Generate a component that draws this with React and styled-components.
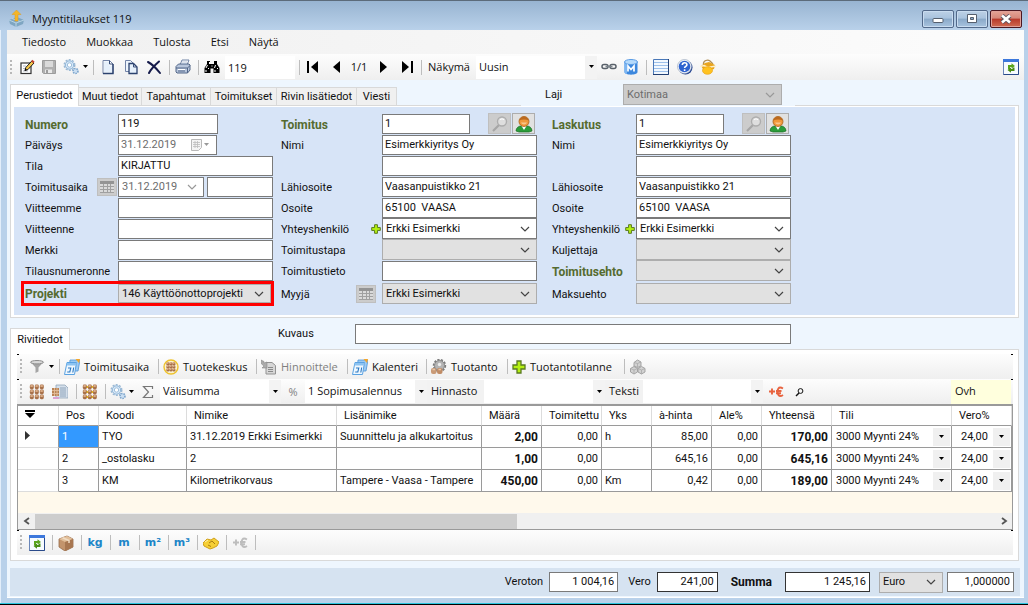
import React from "react";
import styled, { createGlobalStyle, css } from "styled-components";

const uiFont = `"Open Sans", "Noto Sans", sans-serif`;
const formFont = `Roboto, "Liberation Sans", sans-serif`;

const GlobalStyle = createGlobalStyle`
  *, *::before, *::after {
    box-sizing: border-box;
  }

  body {
    margin: 0;
    font: 11px/16px ${formFont};
    color: #111;
  }

  button, input, select {
    font: inherit;
    color: inherit;
    margin: 0;
    padding: 0;
    border: 0;
    border-radius: 0;
    outline: 0;
  }
`;

const Window = styled.div`
  min-height: 100vh;
  display: flex;
  flex-direction: column;
  padding: 0 4px 6px 7px;
  background: #b9d1ea;
  border-top: 1px solid #5c6b7a;
  border-bottom: 1px solid #000;
  box-shadow: inset 0 -1px #2cc5de, inset 1px 0 #e3eefa;
`;

const TitleBar = styled.header`
  height: 29px;
  display: flex;
  align-items: center;
  gap: 7px;
  margin: 0 -4px 0 -7px;
  padding: 6px 6px 0 8px;
  background: linear-gradient(#98b4d1, #b9d1ea);
  font: 11px/16px ${uiFont};
`;

const Title = styled.h1`
  margin: 0;
  flex: 1;
  font: inherit;
`;

const Caption = styled.button`
  width: 32px;
  height: 18px;
  margin-left: -5px;
  display: grid;
  place-items: center;
  border: 1px solid ${p => (p.$close ? "#4b1720" : "#52698a")};
  border-radius: 2px;
  box-shadow: inset 0 0 0 1px ${p => (p.$close ? "#e0a199" : "#c9dcf0")};
  background: ${p =>
    p.$close
      ? "linear-gradient(#e5a496 0, #d6887a 45%, #b8392a 50%, #cf6b52)"
      : "linear-gradient(#bdd1e6 0, #a9c3de 45%, #8aa9c9 50%, #a8c3de)"};
`;

const Client = styled.div`
  flex: 1;
  display: flex;
  flex-direction: column;
  background: #eef6fe;
  border-bottom: 1px solid #fff;
`;

const MenuBar = styled.nav`
  height: 24px;
  display: flex;
  align-items: center;
  gap: 20px;
  padding-left: 15px;
  background: linear-gradient(90deg, #f0f0f0, #fcfcfc);
  font: 11px/16px ${uiFont};
`;

const MenuItem = styled.button`
  background: none;
`;

const Toolbar = styled.div`
  height: ${p => p.$height || 25}px;
  display: flex;
  align-items: center;
  padding-left: 3px;
  background: linear-gradient(#fdfdfd, #efefef);
  font: 11px/16px ${uiFont};

  ${p =>
    p.$docked &&
    css`
      background:
        linear-gradient(#000, #000) 0 0 / 2px 1px no-repeat,
        linear-gradient(#000, #000) 100% 0 / 2px 1px no-repeat,
        linear-gradient(#fdfdfd, #efefef);
    `}
`;

const Grip = styled.span`
  width: 2px;
  height: 15px;
  margin-right: 4px;
  background: repeating-linear-gradient(#b8b8b8 0 2px, transparent 2px 4px);
`;

const Sep = styled.span`
  width: 1px;
  height: 15px;
  margin: 0 2px 0 4px;
  background: #bdbdbd;
`;

const ToolButton = styled.button`
  width: ${p => p.$w || 22}px;
  height: 22px;
  flex: none;
  display: flex;
  align-items: center;
  justify-content: ${p => (p.$text ? "flex-start" : "center")};
  gap: 4px;
  padding-left: ${p => (p.$text ? 2 : 0)}px;
  background: none;
  white-space: nowrap;
  color: ${p => (p.disabled ? "#808080" : "inherit")};
`;

const ToolLabel = styled.label`
  width: ${p => p.$w}px;
  height: 23px;
  line-height: 22px;
  padding-left: 4px;
  background: ${p => (p.$plain ? "none" : "#f2f2f2")};
`;

const ToolOutput = styled.output`
  width: 20px;
  text-align: center;
`;

const ToolInput = styled.input`
  width: 70px;
  height: 23px;
  margin-left: 2px;
  padding-left: 3px;
  background: #fff;
`;

const Push = styled.span`
  flex: 1;
`;

const Price = styled.span`
  width: 60px;
  height: 24px;
  margin-right: 2px;
  padding: 3px 4px;
  background: #ffffdd;
`;

const UnitText = styled.span`
  font: 700 11px/16px "DejaVu Sans", sans-serif;
  color: #1d86c8;
`;

// tabs ------------------------------------------------------------

const TabRow = styled.div`
  display: flex;
  align-items: flex-end;
  height: ${p => p.$height}px;
  margin: ${p => p.$top}px 5px 0 3px;
`;

const Tabs = styled.div`
  width: ${p => (p.$w ? `${p.$w}px` : "auto")};
  height: 22px;
  display: flex;
  align-items: flex-end;
  border-bottom: 1px solid #d9d9d9;
`;

const Tab = styled.button`
  flex: none;
  width: ${p => p.$w}px;
  height: 18px;
  border: solid #d9d9d9;
  border-width: 1px 1px 0 0;
  background: #f0f0f0;

  ${p =>
    p.$active &&
    css`
      height: 22px;
      margin-bottom: -1px;
      border-left-width: 1px;
      background: #fff;
    `}
`;

const TypeField = styled.div`
  width: 274px;
  display: flex;
  align-items: center;
  padding: 0 0 1px 24px;

  label {
    width: 78px;
  }
`;

const Line = styled.span`
  flex: 1;
  border-bottom: 1px solid #d9d9d9;
`;

const DescriptionField = styled.div`
  flex: 1;
  align-self: stretch;
  display: flex;
  align-items: flex-start;
  padding: 4px 0 0 208px;
  border-bottom: 1px solid #d9d9d9;

  label {
    width: 77px;
    line-height: 20px;
  }
`;

const Panel = styled.section`
  margin: 0 5px 0 3px;
  padding: 1px 3px 2px;
  background: #fff;
  border: solid #d9d9d9;
  border-width: 0 1px 1px;
`;

const FormArea = styled.form`
  display: flex;
  padding: 6px 0 9px 7px;
  background: #d7e4f7;
`;

const Column = styled.div`
  display: grid;
  grid-template-rows: repeat(8, 21px) 25px;
  margin-right: ${p => p.$gap}px;
`;

const Row = styled.div`
  display: grid;
  grid-template-columns: ${p => p.$label}px 155px;
  align-items: center;
`;

const HighlightedRow = styled(Row)`
  grid-template-columns: 94px 153px;
  border: 3px solid #ff0000;
  width: 253px;

  label {
    padding-left: 1px;
  }
`;

const LabelCell = styled.div`
  display: flex;
  align-items: center;
  justify-content: space-between;
  padding-left: ${p => p.$indent || 0}px;
  padding-right: ${p => p.$right || 0}px;

  label {
    padding-top: 2px;
  }
`;

const FieldLabel = styled.label`
  ${p =>
    p.$strong &&
    css`
      font-weight: 700;
      font-size: 12px;
      color: #556b2f;
    `}
`;

const Controls = styled.div`
  display: flex;
  align-items: center;
`;

const TextInput = styled.input`
  width: ${p => p.$w || 155}px;
  height: 20px;
  padding: 0 ${p => (p.$number ? 3 : 2)}px 1px;
  border: 1px solid ${p => (p.$dark ? "#333" : "#7a7a7a")};
  background: #fff;
  text-align: ${p => (p.$number ? "right" : "left")};
`;

const SelectBox = styled.span`
  display: inline-grid;
  grid-template-columns: 1fr 17px;
  align-items: center;
  width: ${p => p.$w || 155}px;
  height: ${p => p.$h || 21}px;

  select {
    grid-area: 1 / 1 / 2 / 3;
    width: 100%;
    height: 100%;
    padding: 0 3px;
    appearance: none;
    opacity: 1;
    border: 1px solid ${p => (p.$white ? "#7a7a7a" : "#adadad")};
    background: ${p => (p.$white ? "#fff" : p.$off ? "#cccccc" : "#e1e1e1")};
    color: ${p => (p.$off ? "#6d6d6d" : "inherit")};
  }

  svg {
    grid-area: 1 / 2;
    pointer-events: none;
  }
`;

const FlatSelectBox = styled.span`
  display: inline-grid;
  grid-template-columns: 1fr 12px;
  align-items: center;
  width: ${p => p.$w}px;
  height: 23px;

  select {
    grid-area: 1 / 1 / 2 / 3;
    width: 100%;
    height: 100%;
    padding: 0 0 1px 3px;
    appearance: none;
    background: #fff;
  }

  span {
    grid-area: 1 / 2;
    height: 100%;
    display: grid;
    place-items: center;
    background: #f3f3f3;
    pointer-events: none;
  }
`;

const DateBox = styled.div`
  width: 99px;
  height: 20px;
  display: flex;
  align-items: center;
  border: 1px solid #7a7a7a;
  background: #fff;

  input {
    width: 72px;
    padding-left: 2px;
    background: none;
    color: #6d6d6d;
  }
`;

const SquareButton = styled.button`
  width: ${p => p.$w || 20}px;
  height: ${p => p.$h || 18}px;
  display: grid;
  place-items: center;
  margin-left: ${p => p.$left || 0}px;
  border: 1px solid ${p => (p.disabled ? "#bfbfbf" : "#adadad")};
  background: ${p => (p.disabled ? "#cccccc" : "#e1e1e1")};
`;

const PlusButton = styled.button`
  width: 10px;
  height: 10px;
  display: grid;
  background: none;
`;

// rows ------------------------------------------------------------

const RowsPanel = styled(Panel)`
  flex: 1;
  display: flex;
  flex-direction: column;
  padding: 4px 5px 5px 6px;
`;

const GridBox = styled.div`
  flex: 1;
  display: flex;
  flex-direction: column;
  border: 1px solid #9a9a9a;
  border-top-width: 2px;
  background: #fff9ec;
  overflow: hidden;
`;

const Table = styled.table`
  width: 994px;
  table-layout: fixed;
  border-collapse: separate;
  border-spacing: 0;
  background: #fff;
  white-space: nowrap;

  th,
  td {
    padding: 0 3px;
    border-bottom: 1px solid #9a9a9a;
    overflow: hidden;
  }

  th {
    height: 20px;
    padding-left: 7px;
    font-weight: 400;
    text-align: left;
    border-right: 1px solid #dcdcdc;
  }

  td {
    height: 22px;
    border-right: 1px solid #9a9a9a;
  }

  td:first-child {
    border-bottom-color: #dcdcdc;
  }
`;

const Cell = styled.td`
  text-align: ${p => (p.$num ? "right" : "left")};
  font-weight: ${p => (p.$bold ? 700 : 400)};
  font-size: ${p => (p.$bold ? 12 : 11)}px;
  background: ${p => (p.$selected ? "#3399ff" : "transparent")};
  color: ${p => (p.$selected ? "#fff" : "inherit")};
`;

const DropCell = styled.div`
  display: flex;
  align-items: center;
  justify-content: space-between;
  padding-left: ${p => p.$left || 1}px;
  margin-right: -2px;

  button {
    width: 17px;
    height: 18px;
    display: grid;
    place-items: center;
    background: #f0f0f0;
  }
`;

const ScrollBar = styled.div`
  height: 16px;
  display: flex;
  align-items: center;
  margin-top: auto;
  background: #f0f0f0;

  button {
    width: 17px;
    height: 16px;
    display: grid;
    place-items: center;
    background: none;
  }
`;

const Thumb = styled.span`
  width: 482px;
  height: 15px;
  background: #cdcdcd;
`;

const StatusBar = styled.footer`
  height: 28px;
  display: flex;
  align-items: center;
  justify-content: flex-end;
  margin: 7px 4px 1px 3px;
  padding-right: 6px;
  background: #d6e3f1;

  label {
    padding: 0 6px 0 10px;
  }
`;

const SumLabel = styled.label`
  && {
    padding: 0 13px;
  }
  font-size: 12px;
  font-weight: 700;
`;

const CurrencyGap = styled.span`
  width: 9px;
`;

const RateInput = styled(TextInput)`
  margin-left: 4px;
`;

const TimeInput = styled(TextInput)`
  margin-left: 3px;
`;

// icons -----------------------------------------------------------

function Svg({ w = 16, h = 16, children }) {
  return (
    <svg width={w} height={h} viewBox={`0 0 ${w} ${h}`} fill="none" aria-hidden="true">
      {children}
    </svg>
  );
}

const Chevron = ({ color = "#555" }) => (
  <Svg w={10} h={6}>
    <path d="M1 1l4 4 4-4" stroke={color} strokeWidth="1.2" />
  </Svg>
);

const Caret = ({ color = "#000" }) => (
  <Svg w={7} h={4}>
    <path d="M1 0h5L3.500 3z" fill={color} />
  </Svg>
);

const AppIcon = () => (
  <Svg w={17} h={17}>
    <path d="M1 10l8-3 7 3-1 4-7 3-6-3z" fill="#7fa6c2" />
    <path d="M1 10l7 3 8-3M8 13v4M4 8.500l8 3" stroke="#b7d3e4" />
    <path d="M8.500 0L13 4.500h-3V11H7V4.500H4z" fill="#f5b529" stroke="#e09c17" strokeWidth=".5" />
  </Svg>
);

const EditIcon = () => (
  <Svg>
    <rect x="2" y="4" width="10" height="10.500" fill="#fff" stroke="#333" strokeWidth="1.200" />
    <path d="M4 7h3M4 9.500h2M4 12h5" stroke="#b4b9c4" />
    <path d="M6 11.500l.8-3 6-6.500L15 4 9 10.500z" fill="#f3c64a" stroke="#222" strokeWidth="1" />
    <path d="M12.800 1.500L15 3.500" stroke="#c4402c" strokeWidth="1.800" />
    <path d="M5.500 12l1-2.500L8 11z" fill="#000" />
  </Svg>
);

const SaveIcon = () => (
  <Svg>
    <path d="M1.500 1.500h13v13h-12l-1-1z" fill="#b0b0b0" stroke="#9c9c9c" />
    <path d="M4 2h8v6H4z" fill="#dadada" />
    <path d="M4 10.500h7V14H4z" fill="#e9e9e9" />
    <path d="M5 11h2v3H5z" fill="#9c9c9c" />
  </Svg>
);

const GearsIcon = () => (
  <Svg>
    <circle cx="6.500" cy="6" r="5.200" stroke="#9cb9d4" strokeWidth="1.600" strokeDasharray="2 1.300" />
    <circle cx="6.500" cy="6" r="4.200" fill="#d8e9f8" stroke="#8db4d8" />
    <circle cx="6.500" cy="6" r="2.200" fill="#fff" stroke="#9dbedb" />
    <circle cx="12.500" cy="12" r="2.500" fill="#cbdff2" stroke="#7aa3cb" strokeWidth="1.600" strokeDasharray="1.500 1" />
  </Svg>
);

const PageIcon = () => (
  <Svg>
    <path d="M3 1.500h6.500L13 5v9.500H3z" fill="#fff" stroke="#7485a8" />
    <path d="M4 2.500h5v4h3v7H4z" fill="#e6f0fb" />
    <path d="M9.500 1.500V5H13" stroke="#3a4e78" />
    <path d="M13 5v9.500H3" stroke="#2b416e" strokeWidth="1.400" />
  </Svg>
);

const CopyIcon = () => (
  <Svg>
    <path d="M2.500 1.500h5l3 3v8h-8z" fill="#eef5fd" stroke="#7485a8" />
    <path d="M6 4.500h4.500l3.500 3.500v6.500H6z" fill="#e6f0fb" stroke="#2b416e" strokeWidth="1.300" />
    <path d="M10.500 4.500V8H14" stroke="#3a4e78" />
  </Svg>
);

const DeleteIcon = () => (
  <Svg>
    <path d="M2 3c4 2 8 6 12 11M13 2.500C9 6 5 10 3 14" stroke="#151a4a" strokeWidth="2" strokeLinecap="round" />
  </Svg>
);

const PrintIcon = () => (
  <Svg>
    <path d="M5 6l2-5h7l-2 5z" fill="#fff" stroke="#7184a6" />
    <path d="M1 7.500L3.500 5H14l1 1v5l-2.500 3H2l-1-1z" fill="#b8c6dc" stroke="#526688" />
    <path d="M1 9h11.500L15 6.500M12.500 9v5M3 12h7" stroke="#526688" />
    <path d="M3 10.500h7" stroke="#fff" />
    <path d="M7 3h5M6.500 4.500h5" stroke="#9eb0cc" strokeWidth=".7" />
  </Svg>
);

const BinocularsIcon = () => (
  <Svg>
    <path d="M3 2h3v3h4V2h3v3l2.500 4v5H9.500V9.500h-3V14H.5V9L3 5z" fill="#000" />
    <path d="M3.500 6L2 9M11.500 6L10.500 9M5.500 3v2M7.500 7h1M2 11v2M11 11v2M4 9.500h1M13 9.500h1" stroke="#fff" />
  </Svg>
);

const ArrowIcon = ({ back, bar }) => (
  <Svg w={14} h={14}>
    <g transform={back ? "matrix(-1 0 0 1 14 0)" : undefined}>
      <path d={bar ? "M2 1l7 6-7 6z" : "M4 1l7 6-7 6z"} fill="#000" />
      {bar && <path d="M11 1h2v12h-2z" fill="#000" />}
    </g>
  </Svg>
);

const LinkIcon = () => (
  <Svg>
    <rect x="1" y="5.500" width="6" height="4" rx="2" stroke="#59616a" strokeWidth="1.500" />
    <rect x="9" y="5.500" width="6" height="4" rx="2" stroke="#59616a" strokeWidth="1.500" />
    <path d="M4.500 7.500h7" stroke="#7d868e" strokeWidth="1.600" />
  </Svg>
);

const DatabaseIcon = () => (
  <Svg>
    <path d="M1.500 3v10c0 3.500 13 3.500 13 0V3z" fill="#3c87dd" />
    <path d="M1.500 3v10c0 1 1 1.700 2.500 2V4z" fill="#7db6f2" />
    <ellipse cx="8" cy="3" rx="6.500" ry="2.500" fill="#b5dafb" stroke="#5b9ce5" />
    <path d="M5 12.500V7l3 3.500L11 7v5.500" stroke="#fff" strokeWidth="1.700" />
  </Svg>
);

const ListIcon = () => (
  <Svg>
    <path d="M.5.5h15v15H.5z" fill="#f2f8fe" stroke="#4a78b8" />
    <path d="M1 3.500h14M1 6.500h14M1 9.500h14M1 12.500h14" stroke="#9dc0ea" />
    <path d="M15.500 0v15.500H0" stroke="#213f73" />
  </Svg>
);

const HelpIcon = () => (
  <Svg>
    <circle cx="8.500" cy="8.500" r="7" fill="#1e3f8f" />
    <circle cx="7.500" cy="7.500" r="7" fill="#f5f8fc" stroke="#8f9db5" strokeWidth=".6" />
    <circle cx="7.500" cy="7.500" r="5.800" fill="#2f63cf" />
    <path d="M5.300 6c0-3 4.600-3 4.600-.3 0 1.700-2.300 1.600-2.300 3.300M7.600 10.300v1.600" stroke="#fff" strokeWidth="1.600" />
  </Svg>
);

const CoinIcon = () => (
  <Svg>
    <path d="M4 8L3.500 5.500C3 1 8 .500 10 2l3 3" stroke="#b08f55" strokeWidth="1.300" />
    <path d="M1 7l4-3 4-1 6 3-1 4-4 1-7-1z" fill="#e9a51e" />
    <path d="M0 7.500l4-1 4 2 8-1.500" stroke="#fdf1cc" strokeWidth="1.600" />
    <ellipse cx="7.500" cy="11.500" rx="5" ry="3.800" fill="#ffc21f" stroke="#eaa415" strokeWidth=".7" />
  </Svg>
);

const RefreshIcon = () => (
  <Svg>
    <path d="M.5.500h15v15H.5z" fill="#f7fbff" stroke="#6a86b8" />
    <path d="M0 0h16v3H0z" fill="#3d78dc" />
    <path d="M15.500 3v12.500H.5" stroke="#2a4a8a" />
    <path d="M5 10V6h3.500V4.200L12 7 8.500 9.500V8H7v2z" fill="#5aa51c" />
    <path d="M11.500 8.500V12H8v1.800L4.500 11 8 8.600V10h1.500V8.500z" fill="#4a8e14" />
  </Svg>
);

const FilterIcon = () => (
  <Svg>
    <path d="M1.500 3l5 5.500v5.500l3-1.500V8.500L14.500 3z" fill="#a5a5a5" />
    <ellipse cx="8" cy="3.200" rx="6.500" ry="1.700" fill="#d9d9d9" stroke="#8d8d8d" />
  </Svg>
);

const CalendarIcon = () => (
  <Svg>
    <path d="M6 1h10l-2 11H5z" fill="#9ccaf3" stroke="#4e94d6" strokeWidth=".8" />
    <path d="M11.500 0H16l-1 4z" fill="#f4a52a" />
    <path d="M3 3.500h9.500l-2 12H.5z" fill="#eef7fe" stroke="#5aa2e2" />
    <path d="M3 4h9.500l-.4 2.500H2.500z" fill="#8cc3f1" />
    <path d="M4 9h2.800l-1 4H3.200M9.700 8.500l-.9 5" stroke="#2b78c2" strokeWidth="1.100" />
  </Svg>
);

function Barrels({ yellow, ring }) {
  const spots = ring ? [5, 8, 11] : [3, 8, 13];
  return (
    <Svg>
      {ring && <circle cx="8" cy="8" r="7" fill="#fbf2cf" stroke="#eec22d" strokeWidth="1.400" />}
      {yellow && <path d="M3 3h10M3 8h10M3 13h10" stroke="#f2c718" strokeWidth="2" />}
      {spots.map(x =>
        spots.map(y => (
          <g key={`${x}-${y}`}>
            <rect
              x={x - (ring ? 1.6 : 2.2)}
              y={y - (ring ? 1.8 : 2.4)}
              width={ring ? 3 : 4}
              height={ring ? 3.4 : 4.6}
              rx="1.400"
              fill="#a8714a"
            />
            <ellipse cx={x - 0.4} cy={y - 1} rx={ring ? 1 : 1.500} ry="1" fill="#dcae88" />
          </g>
        ))
      )}
    </Svg>
  );
}

const PriceIcon = () => (
  <Svg>
    <path d="M5 3.500h6l3.500 3V15H5z" fill="#d7d7d7" stroke="#939393" />
    <path d="M7 8.500h5M7 10.500h5M7 12.500h5" stroke="#8a8a8a" />
    <path d="M0 1l3 1.500V4l3-1v6H1l2-2-2.500-2z" fill="#ababab" stroke="#8a8a8a" strokeWidth=".6" />
  </Svg>
);

const ProductionIcon = () => (
  <Svg>
    <circle cx="8.500" cy="6.500" r="5.800" stroke="#7c7c7c" strokeWidth="1.800" strokeDasharray="2.200 1.300" />
    <circle cx="8.500" cy="6.500" r="5" fill="#b4b4b4" stroke="#868686" />
    <circle cx="8.500" cy="5.500" r="1.700" fill="#ececec" />
    <rect x="0" y="9" width="5.500" height="6" rx="2" fill="#c99a76" />
    <rect x="6" y="9" width="5.500" height="6" rx="2" fill="#c08c66" />
    <path d="M1.500 10.500h2.500M7.500 10.500H10" stroke="#e6c5aa" strokeWidth="1.400" />
  </Svg>
);

const PlusIcon = ({ size = 14 }) => (
  <svg width={size} height={size} viewBox="0 0 14 14" aria-hidden="true">
    <path
      d="M5 1h4v4h4v4H9v4H5V9H1V5h4z"
      fill="#b4f012"
      stroke="#5a7a20"
      strokeWidth={size < 12 ? 1.4 : 1.300}
    />
  </svg>
);

const CubesIcon = () => (
  <Svg>
    <path
      d="M4 3.500L7.500 1l3.500 2v4L7.500 8.500 4 7zM0.500 9.500L4 7.500l3.500 2V13L4 15l-3.500-2zM8 9.500l3.500-2 3.500 2V13l-3.500 2L8 13z"
      fill="#d2d2d2"
      stroke="#a3a3a3"
    />
    <path d="M4 3.500l3.500 1L11 3M7.500 4.500v4M.5 9.500L4 11l3.500-1.500M4 11v4M8 9.500l3.500 1.500L15 9.500M11.500 11v4" stroke="#aaa" strokeWidth=".8" />
  </Svg>
);

const SheetIcon = () => (
  <Svg>
    <path d="M4 1h9l3 3v10H4z" fill="#d4dfeb" stroke="#92a5b8" strokeWidth=".8" />
    <path d="M8 4h6M8 6h6M8 8h6M8 10h6M8 12h6" stroke="#7f95ad" strokeWidth=".8" />
    <path d="M0 4h7v8H0z" fill="#b98355" />
    <path d="M0 6.500h7M0 9.500h7M2.500 4v8M5 4v8" stroke="#e2bd9c" strokeWidth=".9" />
    <path d="M1 13h6v2H1z" fill="#d9a2d2" />
  </Svg>
);

const SigmaIcon = () => (
  <Svg w={12} h={14}>
    <path d="M10.500 4V1.500h-9L6.500 7l-5 5.500h9V10" stroke="#777" strokeWidth="1.200" />
  </Svg>
);

const EuroIcon = ({ color = "#e8633f" }) => (
  <Svg>
    <path d="M1 7.500h6M4 4.500v6M15 4.500c-5-3-5.500 2-5.500 3.500s1 6 5.500 3M8 7h5.500M8 9.300h5" stroke={color} strokeWidth="1.900" />
  </Svg>
);

const LensIcon = () => (
  <Svg w={10} h={10}>
    <circle cx="5.500" cy="4" r="2.400" stroke="#111" />
    <path d="M4 6L1 9" stroke="#111" strokeWidth="1.400" />
  </Svg>
);

const BigLensIcon = () => (
  <Svg w={18} h={18}>
    <path d="M8 10l-6 6" stroke="#a6a6a6" strokeWidth="2.200" />
    <circle cx="11" cy="6.500" r="4.500" fill="#dedede" stroke="#adadad" strokeWidth="1.400" />
    <path d="M9 5c1-1.500 3-1.500 4 0" stroke="#fff" />
  </Svg>
);

const PersonIcon = () => (
  <Svg w={18} h={18}>
    <path d="M1 16c0-3.500 3-5 5-5h6c2 0 5 1.500 5 5l-3 1H4z" fill="#2b9c3a" stroke="#1c6e2a" strokeWidth=".7" />
    <path d="M6.500 11L9 15l2.500-4z" fill="#fff" />
    <circle cx="9" cy="6.500" r="5" fill="#f0983a" stroke="#a65f1b" strokeWidth=".8" />
    <path d="M4.300 5.500C5 .5 13 .5 13.700 5.500 11 4 7 4 4.300 5.500z" fill="#bb6a20" />
    <path d="M6 7.500c1 2.500 5 2.500 6 0z" fill="#f9c68b" />
  </Svg>
);

const TableIcon = () => (
  <Svg>
    <path d="M1 2h14v3H1z" fill="#949494" />
    <path d="M1 5h14v9H1z" fill="#dadada" />
    <path d="M1 7.500h14M1 10.500h14M1 13.500h14M4.500 5v9M8.500 5v9M11.500 5v9" stroke="#a0a0a0" />
  </Svg>
);

const DateIcon = () => (
  <Svg w={12} h={12}>
    <path d="M.5.5h10v8l-3 3h-7z" fill="#f4f4f4" stroke="#b9b9b9" />
    <path d="M2 3.500h7M2 5.500h7M2 7.500h7M4 2v7M6.500 2v7" stroke="#bdbdbd" strokeWidth=".8" />
  </Svg>
);

const BoxIcon = () => (
  <Svg>
    <path d="M1 4l8-3 6 3v8l-8 4-6-4z" fill="#c3946c" stroke="#94694a" strokeWidth=".8" />
    <path d="M1 4l6 3 8-3-6-3z" fill="#e2bf9a" />
    <path d="M7 7v9l8-4V4z" fill="#a87751" />
    <path d="M4.500 2.700L11 5.500V8" stroke="#f0dcc4" strokeWidth="1.500" />
  </Svg>
);

const HandshakeIcon = () => (
  <Svg>
    <path d="M0 8l4-4 4 1 3-2 5 4-2 4-4 2-3 1-6-3z" fill="#f6cf35" stroke="#d0a11c" />
    <path d="M6 8l3-2 3 3M5 10l3 1.500" stroke="#a97c12" />
    <path d="M2 7l3-2" stroke="#fff3b0" />
  </Svg>
);

const ScrollArrow = ({ right }) => (
  <Svg w={8} h={8}>
    <path d={right ? "M2 1l4 3-4 3" : "M6 1L2 4l4 3"} stroke="#555" strokeWidth="1.800" />
  </Svg>
);

// composed controls -----------------------------------------------

function Select({ id, value = "", ...rest }) {
  return (
    <SelectBox {...rest}>
      <select id={id} disabled={rest.$off} defaultValue={value}>
        <option value={value}>{value}</option>
      </select>
      <Chevron color={rest.$off ? "#999" : "#444"} />
    </SelectBox>
  );
}

function FlatSelect({ id, value = "", w, label }) {
  return (
    <FlatSelectBox $w={w}>
      <select id={id} aria-label={label} defaultValue={value}>
        <option value={value}>{value}</option>
      </select>
      <span>
        <Caret />
      </span>
    </FlatSelectBox>
  );
}

function Field({ id, label, strong, labelWidth, indent, extra, extraGap, children }) {
  return (
    <Row $label={labelWidth}>
      <LabelCell $indent={indent} $right={extraGap}>
        {label ? (
          <FieldLabel htmlFor={id} $strong={strong}>
            {label}
          </FieldLabel>
        ) : (
          <span />
        )}
        {extra}
      </LabelCell>
      <Controls>{children}</Controls>
    </Row>
  );
}

const AddContact = () => (
  <PlusButton type="button" aria-label="Lisää yhteyshenkilö">
    <PlusIcon size={10} />
  </PlusButton>
);

function OrderColumn() {
  const cell = { labelWidth: 97, indent: 4 };
  return (
    <Column $gap={7}>
      <Field {...cell} id="numero" label="Numero" strong>
        <TextInput id="numero" $w={100} defaultValue="119" />
      </Field>
      <Field {...cell} id="paivays" label="Päiväys">
        <DateBox>
          <input id="paivays" disabled defaultValue="31.12.2019" />
          <DateIcon />
          <Caret color="#999" />
        </DateBox>
      </Field>
      <Field {...cell} id="tila" label="Tila">
        <TextInput id="tila" defaultValue="KIRJATTU" />
      </Field>
      <Field
        {...cell}
        id="toimitusaika"
        label="Toimitusaika"
        extraGap={1}
        extra={
          <SquareButton type="button" disabled aria-label="Kalenteri">
            <TableIcon />
          </SquareButton>
        }
      >
        <Select id="toimitusaika" value="31.12.2019" $w={86} $h={20} $white $off />
        <TimeInput $w={66} aria-label="Kellonaika" />
      </Field>
      {["Viitteemme", "Viitteenne", "Merkki", "Tilausnumeronne"].map(name => (
        <Field {...cell} key={name} id={name} label={name}>
          <TextInput id={name} />
        </Field>
      ))}
      <HighlightedRow>
        <FieldLabel htmlFor="projekti" $strong>
          Projekti
        </FieldLabel>
        <Select id="projekti" value="146 Käyttöönottoprojekti" $w={153} $h={19} />
      </HighlightedRow>
    </Column>
  );
}

function PartyColumn({ prefix, title, labelWidth, gap, children }) {
  const id = name => `${prefix}-${name}`;
  return (
    <Column $gap={gap}>
      <Field labelWidth={labelWidth} id={id("nro")} label={title} strong>
        <TextInput id={id("nro")} $w={88} defaultValue="1" />
        <SquareButton type="button" disabled $w={23} $h={21} $left={18} aria-label="Etsi">
          <BigLensIcon />
        </SquareButton>
        <SquareButton type="button" $w={23} $h={21} $left={1} aria-label="Asiakas">
          <PersonIcon />
        </SquareButton>
      </Field>
      <Field labelWidth={labelWidth} id={id("nimi")} label="Nimi">
        <TextInput id={id("nimi")} defaultValue="Esimerkkiyritys Oy" />
      </Field>
      <Field labelWidth={labelWidth}>
        <TextInput aria-label="Nimi 2" />
      </Field>
      <Field labelWidth={labelWidth} id={id("lahiosoite")} label="Lähiosoite">
        <TextInput id={id("lahiosoite")} defaultValue="Vaasanpuistikko 21" />
      </Field>
      <Field labelWidth={labelWidth} id={id("osoite")} label="Osoite">
        <TextInput id={id("osoite")} defaultValue="65100  VAASA" />
      </Field>
      <Field
        labelWidth={labelWidth}
        id={id("yhteys")}
        label="Yhteyshenkilö"
        extra={<AddContact />}
        extraGap={1}
      >
        <Select id={id("yhteys")} value="Erkki Esimerkki" $white />
      </Field>
      {children}
    </Column>
  );
}

const columns = [
  { name: "Pos", w: 40 },
  { name: "Koodi", w: 88 },
  { name: "Nimike", w: 150 },
  { name: "Lisänimike", w: 145 },
  { name: "Määrä", w: 60, num: true, bold: true },
  { name: "Toimitettu", w: 60, num: true },
  { name: "Yks", w: 50 },
  { name: "à-hinta", w: 60, num: true },
  { name: "Ale%", w: 50, num: true },
  { name: "Yhteensä", w: 70, num: true, bold: true },
  { name: "Tili", w: 120, drop: true },
  { name: "Vero%", w: 60, drop: true }
];

const rows = [
  ["1", "TYO", "31.12.2019 Erkki Esimerkki", "Suunnittelu ja alkukartoitus", "2,00", "0,00", "h", "85,00", "0,00", "170,00", "3000 Myynti 24%", "24,00"],
  ["2", "_ostolasku", "2", "", "1,00", "0,00", "", "645,16", "0,00", "645,16", "3000 Myynti 24%", "24,00"],
  ["3", "KM", "Kilometrikorvaus", "Tampere - Vaasa - Tampere", "450,00", "0,00", "Km", "0,42", "0,00", "189,00", "3000 Myynti 24%", "24,00"]
];

function OrderRows() {
  return (
    <Table>
      <colgroup>
        <col style={{ width: 41 }} />
        {columns.map(c => (
          <col key={c.name} style={{ width: c.w }} />
        ))}
      </colgroup>
      <thead>
        <tr>
          <th aria-label="Valikko">
            <Svg w={10} h={9}>
              <path d="M0 0h10v2H0zM0 3h10L5 8z" fill="#000" />
            </Svg>
          </th>
          {columns.map(c => (
            <th key={c.name}>{c.name}</th>
          ))}
        </tr>
      </thead>
      <tbody>
        {rows.map((row, i) => (
          <tr key={row[0]}>
            <Cell>
              {i === 0 && (
                <Svg w={14} h={9}>
                  <path d="M4 0l5 4.500L4 9z" fill="#333" />
                </Svg>
              )}
            </Cell>
            {row.map((value, j) => (
              <Cell
                key={columns[j].name}
                $num={columns[j].num}
                $bold={columns[j].bold}
                $selected={i === 0 && j === 0}
              >
                {columns[j].drop ? (
                  <DropCell $left={j === 11 ? 6 : 1}>
                    {value}
                    <button type="button" aria-label={columns[j].name}>
                      <Caret />
                    </button>
                  </DropCell>
                ) : (
                  value
                )}
              </Cell>
            ))}
          </tr>
        ))}
      </tbody>
    </Table>
  );
}

function MainToolbar() {
  return (
    <Toolbar $height={26}>
      <Grip />
      <ToolButton aria-label="Muokkaa"><EditIcon /></ToolButton>
      <ToolButton aria-label="Tallenna" disabled><SaveIcon /></ToolButton>
      <ToolButton aria-label="Toiminnot"><GearsIcon /></ToolButton>
      <Caret />
      <Sep />
      <ToolButton $w={23} aria-label="Uusi"><PageIcon /></ToolButton>
      <ToolButton $w={23} aria-label="Kopioi"><CopyIcon /></ToolButton>
      <ToolButton $w={23} aria-label="Poista"><DeleteIcon /></ToolButton>
      <Sep />
      <ToolButton aria-label="Tulosta"><PrintIcon /></ToolButton>
      <Sep />
      <ToolButton aria-label="Etsi"><BinocularsIcon /></ToolButton>
      <ToolInput aria-label="Numero" defaultValue="119" />
      <Sep />
      <ToolButton aria-label="Ensimmäinen"><ArrowIcon back bar /></ToolButton>
      <ToolButton $w={25} aria-label="Edellinen"><ArrowIcon back /></ToolButton>
      <ToolOutput>1/1</ToolOutput>
      <ToolButton $w={28} aria-label="Seuraava"><ArrowIcon /></ToolButton>
      <ToolButton $w={20} aria-label="Viimeinen"><ArrowIcon bar /></ToolButton>
      <Sep />
      <ToolLabel $w={52} $plain htmlFor="nakyma">Näkymä</ToolLabel>
      <FlatSelect id="nakyma" value="Uusin" w={121} />
      <ToolButton $w={23} aria-label="Linkki"><LinkIcon /></ToolButton>
      <ToolButton aria-label="Tietokanta"><DatabaseIcon /></ToolButton>
      <Sep />
      <ToolButton $w={24} aria-label="Lista"><ListIcon /></ToolButton>
      <ToolButton $w={23} aria-label="Ohje"><HelpIcon /></ToolButton>
      <ToolButton $w={23} aria-label="Kassa"><CoinIcon /></ToolButton>
      <Push />
      <ToolButton $w={26} aria-label="Päivitä"><RefreshIcon /></ToolButton>
    </Toolbar>
  );
}

function RowToolbars() {
  return (
    <>
      <Toolbar $docked>
        <Grip />
        <ToolButton aria-label="Suodata"><FilterIcon /></ToolButton>
        <Caret />
        <Sep />
        <ToolButton $w={92} $text><CalendarIcon />Toimitusaika</ToolButton>
        <Sep />
        <ToolButton $w={91} $text><Barrels ring />Tuotekeskus</ToolButton>
        <Sep />
        <ToolButton $w={84} $text disabled><PriceIcon />Hinnoittele</ToolButton>
        <Sep />
        <ToolButton $w={72} $text><CalendarIcon />Kalenteri</ToolButton>
        <Sep />
        <ToolButton $w={74} $text><ProductionIcon />Tuotanto</ToolButton>
        <Sep />
        <ToolButton $w={110} $text><PlusIcon />Tuotantotilanne</ToolButton>
        <Sep />
        <ToolButton disabled aria-label="Kuutiot"><CubesIcon /></ToolButton>
      </Toolbar>
      <Toolbar $docked>
        <Grip />
        <ToolButton aria-label="Tuotteet"><Barrels /></ToolButton>
        <ToolButton $w={24} aria-label="Tuotelista"><SheetIcon /></ToolButton>
        <Sep />
        <ToolButton aria-label="Rakenne"><Barrels yellow /></ToolButton>
        <Sep />
        <ToolButton $w={20} aria-label="Toiminnot"><GearsIcon /></ToolButton>
        <Caret />
        <ToolButton $w={25} aria-label="Summa"><SigmaIcon /></ToolButton>
        <FlatSelect label="Summatyyppi" value="Välisumma" w={121} />
        <ToolButton $w={24} disabled>%</ToolButton>
        <FlatSelect label="Alennus" value="1 Sopimusalennus" w={122} />
        <ToolLabel $w={57} htmlFor="hinnasto">Hinnasto</ToolLabel>
        <FlatSelect id="hinnasto" w={121} />
        <ToolLabel $w={38} htmlFor="teksti">Teksti</ToolLabel>
        <FlatSelect id="teksti" w={120} />
        <ToolButton $w={26} aria-label="Lisää hinta"><EuroIcon /></ToolButton>
        <ToolButton aria-label="Hae"><LensIcon /></ToolButton>
        <Push />
        <Price>Ovh</Price>
      </Toolbar>
    </>
  );
}

function UnitToolbar() {
  return (
    <Toolbar $docked>
      <Grip />
      <ToolButton aria-label="Päivitä"><RefreshIcon /></ToolButton>
      <Sep />
      <ToolButton aria-label="Paketti"><BoxIcon /></ToolButton>
      <Sep />
      <ToolButton><UnitText>kg</UnitText></ToolButton>
      <Sep />
      <ToolButton><UnitText>m</UnitText></ToolButton>
      <Sep />
      <ToolButton><UnitText>m²</UnitText></ToolButton>
      <Sep />
      <ToolButton><UnitText>m³</UnitText></ToolButton>
      <Sep />
      <ToolButton aria-label="Sopimus"><HandshakeIcon /></ToolButton>
      <Sep />
      <ToolButton disabled aria-label="Lisää euro"><EuroIcon color="#bdbdbd" /></ToolButton>
      <Sep />
    </Toolbar>
  );
}

function App() {
  return (
    <>
      <GlobalStyle />
      <Window>
        <TitleBar>
          <AppIcon />
          <Title>Myyntitilaukset 119</Title>
          <Caption aria-label="Pienennä">
            <Svg w={12} h={10}>
              <rect x="1" y="4.500" width="10" height="4" rx="1" fill="#fff" stroke="#555f6e" />
            </Svg>
          </Caption>
          <Caption aria-label="Suurenna">
            <Svg w={12} h={10}>
              <path d="M1.500.5h9v8h-9z" fill="#fff" stroke="#555f6e" />
              <path d="M4.500 3.500h3v2h-3z" fill="#8aa9c9" stroke="#555f6e" />
            </Svg>
          </Caption>
          <Caption $close aria-label="Sulje">
            <Svg w={12} h={10}>
              <path d="M2 1.500l8 7M10 1.500l-8 7" stroke="#5c5560" strokeWidth="4.400" />
              <path d="M2 1.500l8 7M10 1.500l-8 7" stroke="#fff" strokeWidth="2.600" />
            </Svg>
          </Caption>
        </TitleBar>
        <Client>
          <MenuBar>
            {["Tiedosto", "Muokkaa", "Tulosta", "Etsi", "Näytä"].map(name => (
              <MenuItem key={name}>{name}</MenuItem>
            ))}
          </MenuBar>
          <MainToolbar />

          <TabRow $height={26} $top={0}>
            <Tabs $w={511}>
              <Tab $w={69} $active>Perustiedot</Tab>
              <Tab $w={63}>Muut tiedot</Tab>
              <Tab $w={69}>Tapahtumat</Tab>
              <Tab $w={66}>Toimitukset</Tab>
              <Tab $w={80}>Rivin lisätiedot</Tab>
              <Tab $w={40}>Viesti</Tab>
            </Tabs>
            <TypeField>
              <label htmlFor="laji">Laji</label>
              <Select id="laji" value="Kotimaa" $w={159} $off />
            </TypeField>
            <Line />
          </TabRow>
          <Panel>
            <FormArea>
              <OrderColumn />
              <PartyColumn prefix="toimitus" title="Toimitus" labelWidth={101} gap={15}>
                <Field labelWidth={101} id="toimitustapa" label="Toimitustapa">
                  <Select id="toimitustapa" />
                </Field>
                <Field labelWidth={101} id="toimitustieto" label="Toimitustieto">
                  <TextInput id="toimitustieto" />
                </Field>
                <Field
                  labelWidth={101}
                  id="myyja"
                  label="Myyjä"
                  extraGap={6}
                  extra={
                    <SquareButton type="button" disabled aria-label="Myyjäluettelo">
                      <TableIcon />
                    </SquareButton>
                  }
                >
                  <Select id="myyja" value="Erkki Esimerkki" />
                </Field>
              </PartyColumn>
              <PartyColumn prefix="laskutus" title="Laskutus" labelWidth={84} gap={0}>
                <Field labelWidth={84} id="kuljettaja" label="Kuljettaja">
                  <Select id="kuljettaja" />
                </Field>
                <Field labelWidth={84} id="toimitusehto" label="Toimitusehto" strong>
                  <Select id="toimitusehto" />
                </Field>
                <Field labelWidth={84} id="maksuehto" label="Maksuehto">
                  <Select id="maksuehto" />
                </Field>
              </PartyColumn>
            </FormArea>
          </Panel>

          <TabRow $height={30} $top={2}>
            <Tabs>
              <Tab $w={60} $active>Rivitiedot</Tab>
            </Tabs>
            <DescriptionField>
              <label htmlFor="kuvaus">Kuvaus</label>
              <TextInput id="kuvaus" $w={436} />
            </DescriptionField>
          </TabRow>
          <RowsPanel>
            <RowToolbars />
            <GridBox>
              <OrderRows />
              <ScrollBar>
                <button type="button" aria-label="Vieritä vasemmalle"><ScrollArrow /></button>
                <Thumb />
                <Push />
                <button type="button" aria-label="Vieritä oikealle"><ScrollArrow right /></button>
              </ScrollBar>
            </GridBox>
            <UnitToolbar />
          </RowsPanel>

          <StatusBar>
            <label htmlFor="veroton">Veroton</label>
            <TextInput id="veroton" $w={69} $number defaultValue="1 004,16" />
            <label htmlFor="vero">Vero</label>
            <TextInput id="vero" $w={61} $number $dark defaultValue="241,00" />
            <SumLabel htmlFor="summa">Summa</SumLabel>
            <TextInput id="summa" $w={85} $number $dark defaultValue="1 245,16" />
            <CurrencyGap />
            <Select id="valuutta" value="Euro" $w={64} />
            <RateInput $w={67} $number aria-label="Kurssi" defaultValue="1,000000" />
          </StatusBar>
        </Client>
      </Window>
    </>
  );
}

export default App;
